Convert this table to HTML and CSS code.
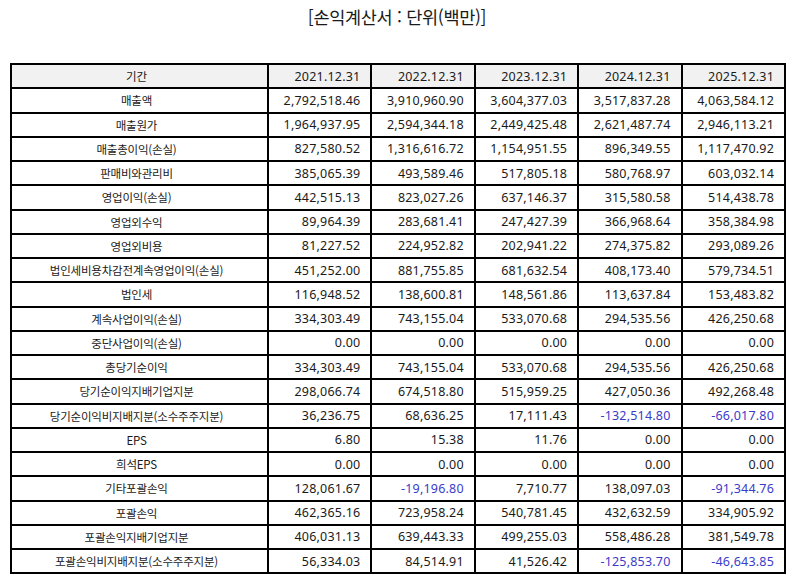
FILE: index.html
```html
<!DOCTYPE html>
<html lang="ko">
<head>
<meta charset="utf-8">
<title>손익계산서</title>
<link rel="stylesheet" href="styles.css">
</head>
<body>
<div class="page">
  <h1 class="title">[손익계산서 : 단위(백만)]</h1>
  <table class="fin">
    <colgroup><col class="c-label"><col><col><col><col><col></colgroup>
    <thead>
      <tr><th class="label">기간</th><th class="num">2021.12.31</th><th class="num">2022.12.31</th><th class="num">2023.12.31</th><th class="num">2024.12.31</th><th class="num">2025.12.31</th></tr>
    </thead>
    <tbody>
      <tr><td class="label">매출액</td><td class="num">2,792,518.46</td><td class="num">3,910,960.90</td><td class="num">3,604,377.03</td><td class="num">3,517,837.28</td><td class="num">4,063,584.12</td></tr>
      <tr><td class="label">매출원가</td><td class="num">1,964,937.95</td><td class="num">2,594,344.18</td><td class="num">2,449,425.48</td><td class="num">2,621,487.74</td><td class="num">2,946,113.21</td></tr>
      <tr><td class="label">매출총이익(손실)</td><td class="num">827,580.52</td><td class="num">1,316,616.72</td><td class="num">1,154,951.55</td><td class="num">896,349.55</td><td class="num">1,117,470.92</td></tr>
      <tr><td class="label">판매비와관리비</td><td class="num">385,065.39</td><td class="num">493,589.46</td><td class="num">517,805.18</td><td class="num">580,768.97</td><td class="num">603,032.14</td></tr>
      <tr><td class="label">영업이익(손실)</td><td class="num">442,515.13</td><td class="num">823,027.26</td><td class="num">637,146.37</td><td class="num">315,580.58</td><td class="num">514,438.78</td></tr>
      <tr><td class="label">영업외수익</td><td class="num">89,964.39</td><td class="num">283,681.41</td><td class="num">247,427.39</td><td class="num">366,968.64</td><td class="num">358,384.98</td></tr>
      <tr><td class="label">영업외비용</td><td class="num">81,227.52</td><td class="num">224,952.82</td><td class="num">202,941.22</td><td class="num">274,375.82</td><td class="num">293,089.26</td></tr>
      <tr><td class="label">법인세비용차감전계속영업이익(손실)</td><td class="num">451,252.00</td><td class="num">881,755.85</td><td class="num">681,632.54</td><td class="num">408,173.40</td><td class="num">579,734.51</td></tr>
      <tr><td class="label">법인세</td><td class="num">116,948.52</td><td class="num">138,600.81</td><td class="num">148,561.86</td><td class="num">113,637.84</td><td class="num">153,483.82</td></tr>
      <tr><td class="label">계속사업이익(손실)</td><td class="num">334,303.49</td><td class="num">743,155.04</td><td class="num">533,070.68</td><td class="num">294,535.56</td><td class="num">426,250.68</td></tr>
      <tr><td class="label">중단사업이익(손실)</td><td class="num">0.00</td><td class="num">0.00</td><td class="num">0.00</td><td class="num">0.00</td><td class="num">0.00</td></tr>
      <tr><td class="label">총당기순이익</td><td class="num">334,303.49</td><td class="num">743,155.04</td><td class="num">533,070.68</td><td class="num">294,535.56</td><td class="num">426,250.68</td></tr>
      <tr><td class="label">당기순이익지배기업지분</td><td class="num">298,066.74</td><td class="num">674,518.80</td><td class="num">515,959.25</td><td class="num">427,050.36</td><td class="num">492,268.48</td></tr>
      <tr><td class="label">당기순이익비지배지분(소수주주지분)</td><td class="num">36,236.75</td><td class="num">68,636.25</td><td class="num">17,111.43</td><td class="num neg">-132,514.80</td><td class="num neg">-66,017.80</td></tr>
      <tr><td class="label">EPS</td><td class="num">6.80</td><td class="num">15.38</td><td class="num">11.76</td><td class="num">0.00</td><td class="num">0.00</td></tr>
      <tr><td class="label">희석EPS</td><td class="num">0.00</td><td class="num">0.00</td><td class="num">0.00</td><td class="num">0.00</td><td class="num">0.00</td></tr>
      <tr><td class="label">기타포괄손익</td><td class="num">128,061.67</td><td class="num neg">-19,196.80</td><td class="num">7,710.77</td><td class="num">138,097.03</td><td class="num neg">-91,344.76</td></tr>
      <tr><td class="label">포괄손익</td><td class="num">462,365.16</td><td class="num">723,958.24</td><td class="num">540,781.45</td><td class="num">432,632.59</td><td class="num">334,905.92</td></tr>
      <tr><td class="label">포괄손익지배기업지분</td><td class="num">406,031.13</td><td class="num">639,443.33</td><td class="num">499,255.03</td><td class="num">558,486.28</td><td class="num">381,549.78</td></tr>
      <tr><td class="label">포괄손익비지배지분(소수주주지분)</td><td class="num">56,334.03</td><td class="num">84,514.91</td><td class="num">41,526.42</td><td class="num neg">-125,853.70</td><td class="num neg">-46,643.85</td></tr>
    </tbody>
  </table>
</div>
</body>
</html>
```

FILE: styles.css
```css
html, body {
  margin: 0;
  padding: 0;
  background: #ffffff;
}

.page {
  padding: 7px 0 0 10px;
  color: #1a1a1a;
}

.title {
  margin: 0 0 0 -10px;
  font-family: "Noto Sans CJK KR", "Noto Sans", sans-serif;
  font-size: 17.5px;
  font-weight: 400;
  letter-spacing: -0.3px;
  line-height: 20px;
  text-align: center;
  color: #1a1a1a;
}

.fin {
  margin-top: 36px;
  width: 776px;
  table-layout: fixed;
  border-collapse: separate;
  border-spacing: 0;
  border: 1px solid #000;
}

.c-label {
  width: 257px;
}

.fin th,
.fin td {
  border: 1px solid #000;
  height: 22.25px;
  padding: 0 10px 0 4px;
  vertical-align: middle;
  font-weight: 400;
  white-space: nowrap;
  overflow: hidden;
}

.fin thead th {
  background: #f1f1f1;
}

.label {
  text-align: center;
  font-family: "Noto Sans CJK KR", "Noto Sans", sans-serif;
  font-size: 11.5px;
  letter-spacing: -0.2px;
}

.num {
  text-align: right;
  font-family: "Noto Sans", "Noto Sans CJK KR", sans-serif;
  font-size: 12.5px;
  letter-spacing: 0.2px;
}

.neg {
  color: #3b3bc9;
}
```
